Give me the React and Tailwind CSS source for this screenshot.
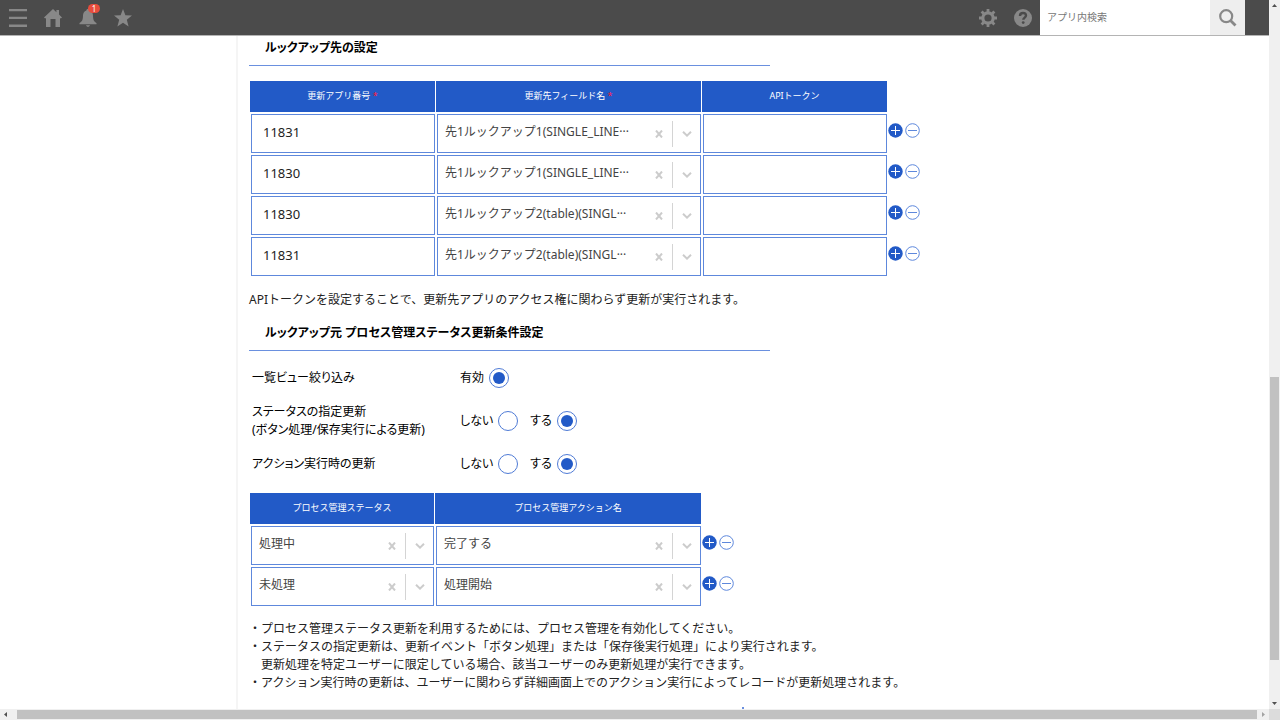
import { useState } from "react";

const lookupRows = [
  { app: "11831", field: "先1ルックアップ1(SINGLE_LINE···" },
  { app: "11830", field: "先1ルックアップ1(SINGLE_LINE···" },
  { app: "11830", field: "先1ルックアップ2(table)(SINGL···" },
  { app: "11831", field: "先1ルックアップ2(table)(SINGL···" },
];

const processRows = [
  { status: "処理中", action: "完了する" },
  { status: "未処理", action: "処理開始" },
];

const notes = [
  "・プロセス管理ステータス更新を利用するためには、プロセス管理を有効化してください。",
  "・ステータスの指定更新は、更新イベント「ボタン処理」または「保存後実行処理」により実行されます。",
  "　更新処理を特定ユーザーに限定している場合、該当ユーザーのみ更新処理が実行できます。",
  "・アクション実行時の更新は、ユーザーに関わらず詳細画面上でのアクション実行によってレコードが更新処理されます。",
];

function HeaderButton({ label, children }) {
  return (
    <button type="button" aria-label={label} className="relative flex h-[35px] w-[35px] items-center justify-center text-[#888888]">
      {children}
    </button>
  );
}

function Header() {
  return (
    <header className="flex h-9 shrink-0 items-start border-b border-[#b4b4b4] bg-[#4b4b4b]">
      <HeaderButton label="メニュー">
        <svg width="18" height="18" viewBox="0 0 18 18" fill="currentColor">
          <path d="M0 0h18v2.300H0zM0 7.800h18v2.300H0zM0 15.600h18v2.300H0z" />
        </svg>
      </HeaderButton>
      <HeaderButton label="ホーム">
        <svg width="18" height="18" viewBox="0 0 18 18" fill="currentColor">
          <path d="M9 0 0 8.6l1.2 1L2 9v9h4.5v-8h5v8H16V9l.8.6 1.2-1-3-3V1h-2.6v2.3z" />
        </svg>
      </HeaderButton>
      <HeaderButton label="通知">
        <svg width="18" height="18" viewBox="0 0 18 18" fill="currentColor">
          <path d="M9 0c1 0 1.6.6 1.6 1.4C13 2.2 14 4.300 14 6.500c0 4.500 1 6 3.500 7.500v1.300h-17V14C3 12.500 4 11 4 6.500c0-2.200 1-4.300 3.400-5.100C7.400.6 8 0 9 0zM7 16.300h4c-.2.9-1 1.500-2 1.500s-1.800-.6-2-1.500z" />
        </svg>
        <span className="absolute top-1 left-[18px] h-[9px] w-3 rounded-full bg-[#e74c3c] text-center text-[8px] leading-[9px] text-white">1</span>
      </HeaderButton>
      <HeaderButton label="お気に入り">
        <svg width="18" height="18" viewBox="0 0 18 18" fill="currentColor">
          <path d="m9 0 2.400 6.300 6.600.3-5.200 4.200 1.800 6.700L9 13.800l-5.600 3.700 1.800-6.700L0 6.600l6.600-.3z" />
        </svg>
      </HeaderButton>
      <div className="flex-1" />
      <HeaderButton label="設定">
        <svg width="18" height="18" viewBox="0 0 18 18" fill="none" stroke="currentColor">
          <circle cx="9" cy="9" r="5.200" strokeWidth="3.200" />
          <path d="M9 0v3M9 15v3M0 9h3M15 9h3M2.600 2.600l2.200 2.200M13.200 13.200l2.200 2.200M2.600 15.400l2.200-2.200M13.200 4.800l2.200-2.200" strokeWidth="2.800" />
        </svg>
      </HeaderButton>
      <HeaderButton label="ヘルプ">
        <svg width="18" height="18" viewBox="0 0 18 18">
          <circle cx="9" cy="9" r="9" fill="currentColor" />
          <path d="M6 7c0-1.900 1.300-3 3-3s3 1 3 2.600c0 2-2.700 2-2.700 4.200" fill="none" stroke="#4b4b4b" strokeWidth="2.400" />
          <circle cx="9.200" cy="13.600" r="1.400" fill="#4b4b4b" />
        </svg>
      </HeaderButton>
      <form className="mr-6 flex" onSubmit={(e) => e.preventDefault()}>
        <input aria-label="アプリ内検索" placeholder="アプリ内検索" className="h-[35px] w-[170px] bg-white px-[7px] pb-0.5 text-[10px] text-[#333333] outline-none placeholder:text-[#777777]" />
        <button aria-label="検索" className="flex h-[35px] w-[35px] items-center justify-center bg-[#eeeeee] text-[#888888]">
          <svg width="18" height="18" viewBox="0 0 18 18" fill="none" stroke="currentColor">
            <circle cx="7.200" cy="7.200" r="6" strokeWidth="2.200" />
            <path d="m11.500 11.500 5 5" strokeWidth="2.800" />
          </svg>
        </button>
      </form>
    </header>
  );
}

function SectionTitle({ children }) {
  return <h2 className="w-[521px] border-b border-[#6a90df] px-4 pt-px pb-2 text-xs leading-[18px] font-bold text-black [font-feature-settings:'palt']">{children}</h2>;
}

function Th({ children, required }) {
  return (
    <th className="h-8 border-r border-b border-white bg-[#225ac7] bg-clip-padding pb-0.5 text-[9px] leading-3 font-normal text-white">
      {children}
      {required && <span className="text-[#ff1a3c]"> *</span>}
    </th>
  );
}

function TextField({ label, defaultValue }) {
  return <input aria-label={label} defaultValue={defaultValue} className="block h-[39px] w-full border border-[#5e88dc] bg-white px-[11px] pb-[3px] text-[13px] text-[#222222] outline-none" />;
}

function SelectField({ label, value }) {
  const [current, setCurrent] = useState(value);

  return (
    <div className="flex h-[39px] items-center border border-[#5e88dc] bg-white text-[#cccccc]">
      <select aria-label={label} value={current} onChange={(e) => setCurrent(e.target.value)} className="h-full min-w-0 flex-1 appearance-none pb-[3px] pl-[7px] text-xs text-[#444444] outline-none">
        <option value={value}>{value}</option>
        <option value="" />
      </select>
      <button type="button" aria-label="クリア" onClick={() => setCurrent("")} className="flex h-full w-[26px] items-center justify-center">
        <svg width="8" height="8" viewBox="0 0 8 8" fill="none" stroke="currentColor" strokeWidth="2">
          <path d="m1 .5 6 7M7 .5l-6 7" />
        </svg>
      </button>
      <span className="h-[26px] w-px bg-[#d4d4d4]" />
      <span className="flex w-[27px] justify-center">
        <svg width="10" height="6" viewBox="0 0 10 6" fill="none" stroke="currentColor" strokeWidth="2">
          <path d="m1 .8 4 3.800L9 .8" />
        </svg>
      </span>
    </div>
  );
}

function RowButtons() {
  return (
    <td className="pb-[7px]">
      <div className="flex gap-0.5">
        <button type="button" aria-label="行を追加">
          <svg width="15" height="15" viewBox="0 0 15 15" className="block">
            <circle cx="7.500" cy="7.500" r="7.200" fill="#225ac7" />
            <path d="M7.500 3v9M3 7.500h9" stroke="#ffffff" />
          </svg>
        </button>
        <button type="button" aria-label="行を削除">
          <svg width="15" height="15" viewBox="0 0 15 15" fill="none" stroke="#5e88dc" className="block">
            <circle cx="7.500" cy="7.500" r="6.800" />
            <path d="M3 7.500h9" />
          </svg>
        </button>
      </div>
    </td>
  );
}

function Radio({ name, label, defaultChecked }) {
  return (
    <label className="flex items-center gap-[5px]">
      {label}
      <input type="radio" name={name} defaultChecked={defaultChecked} className="h-5 w-5 appearance-none rounded-full border border-[#4f7bd6] bg-clip-content p-[3px] checked:bg-[#225ac7]" />
    </label>
  );
}

function SettingRow({ title, children }) {
  return (
    <div role="group" className="flex items-center">
      <div className="w-52 leading-[18px]">{title}</div>
      <div className="flex gap-3">{children}</div>
    </div>
  );
}

function Content() {
  return (
    <main className="min-w-0 flex-1 overflow-hidden pt-0.5 pl-[11px] text-xs leading-[18px] text-[#222222]">
      <SectionTitle>ルックアップ先の設定</SectionTitle>
      <table className="mt-[15px] ml-px table-fixed border-separate border-spacing-0">
        <colgroup>
          <col className="w-[186px]" />
          <col className="w-[266px]" />
          <col className="w-[186px]" />
          <col className="w-8" />
        </colgroup>
        <thead>
          <tr>
            <Th required>更新アプリ番号</Th>
            <Th required>更新先フィールド名</Th>
            <Th>APIトークン</Th>
            <td />
          </tr>
        </thead>
        <tbody>
          {lookupRows.map((row, i) => (
            <tr key={i}>
              <td className="p-px"><TextField label="更新アプリ番号" defaultValue={row.app} /></td>
              <td className="p-px"><SelectField label="更新先フィールド名" value={row.field} /></td>
              <td className="p-px"><TextField label="APIトークン" defaultValue="" /></td>
              <RowButtons />
            </tr>
          ))}
        </tbody>
      </table>
      <p className="mt-3.5 mb-3.5">APIトークンを設定することで、更新先アプリのアクセス権に関わらず更新が実行されます。</p>

      <SectionTitle>ルックアップ元 プロセス管理ステータス更新条件設定</SectionTitle>
      <div className="mt-[17px] flex flex-col gap-[15px] pl-[3px] text-black [font-feature-settings:'palt']">
        <SettingRow title="一覧ビュー絞り込み">
          <Radio name="view" label="有効" defaultChecked />
        </SettingRow>
        <SettingRow title={<>ステータスの指定更新<br />(ボタン処理/保存実行による更新)</>}>
          <Radio name="status" label="しない" />
          <Radio name="status" label="する" defaultChecked />
        </SettingRow>
        <SettingRow title="アクション実行時の更新">
          <Radio name="action" label="しない" />
          <Radio name="action" label="する" defaultChecked />
        </SettingRow>
      </div>

      <table className="mt-[19px] ml-px table-fixed border-separate border-spacing-0">
        <colgroup>
          <col className="w-[185px]" />
          <col className="w-[267px]" />
          <col className="w-8" />
        </colgroup>
        <thead>
          <tr>
            <Th>プロセス管理ステータス</Th>
            <Th>プロセス管理アクション名</Th>
            <td />
          </tr>
        </thead>
        <tbody>
          {processRows.map((row) => (
            <tr key={row.status}>
              <td className="p-px"><SelectField label="プロセス管理ステータス" value={row.status} /></td>
              <td className="p-px"><SelectField label="プロセス管理アクション名" value={row.action} /></td>
              <RowButtons />
            </tr>
          ))}
        </tbody>
      </table>

      <div className="mt-[13px]">
        {notes.map((note) => <p key={note}>{note}</p>)}
      </div>
      <div className="mt-[15px] ml-[493px] h-0.5 w-0.5 bg-[#6a90df]" />
    </main>
  );
}

export default function App() {
  return (
    <div className="flex h-screen flex-col overflow-hidden bg-white font-['Noto_Sans','Noto_Sans_CJK_JP',sans-serif]">
      <div className="flex min-h-0 flex-1">
        <div className="flex min-w-0 flex-1 flex-col">
          <Header />
          <div className="flex min-h-0 flex-1">
            <aside className="w-[236px] shrink-0" />
            <div className="w-0.5 shrink-0 bg-[#f5f5f5]" />
            <Content />
          </div>
        </div>
        {/* vertical scrollbar */}
        <div className="flex w-[11px] flex-col items-center bg-[#f0f0f0] py-1">
          <svg width="5" height="3" viewBox="0 0 5 3" fill="#505050"><path d="M2.500 0 5 3H0z" /></svg>
          <div className="flex-[370]" />
          <div className="w-[9px] flex-[283] bg-[#c1c1c1]" />
          <div className="flex-[42]" />
          <svg width="5" height="3" viewBox="0 0 5 3" fill="#505050"><path d="M0 0h5L2.500 3z" /></svg>
        </div>
      </div>
      {/* horizontal scrollbar */}
      <div className="flex h-[11px] shrink-0 bg-[#f0f0f0]">
        <div className="flex flex-1 items-center gap-2.5 pl-1">
          <svg width="3" height="5" viewBox="0 0 3 5" fill="#505050"><path d="M3 0v5L0 2.500z" /></svg>
          <div className="h-[9px] flex-1 bg-[#c1c1c1]" />
        </div>
        <div className="flex w-3 items-center justify-center">
          <svg width="3" height="5" viewBox="0 0 3 5" fill="#a3a3a3"><path d="M0 0v5l3-2.500z" /></svg>
        </div>
        <div className="w-[11px] bg-[#dcdcdc]" />
      </div>
    </div>
  );
}
